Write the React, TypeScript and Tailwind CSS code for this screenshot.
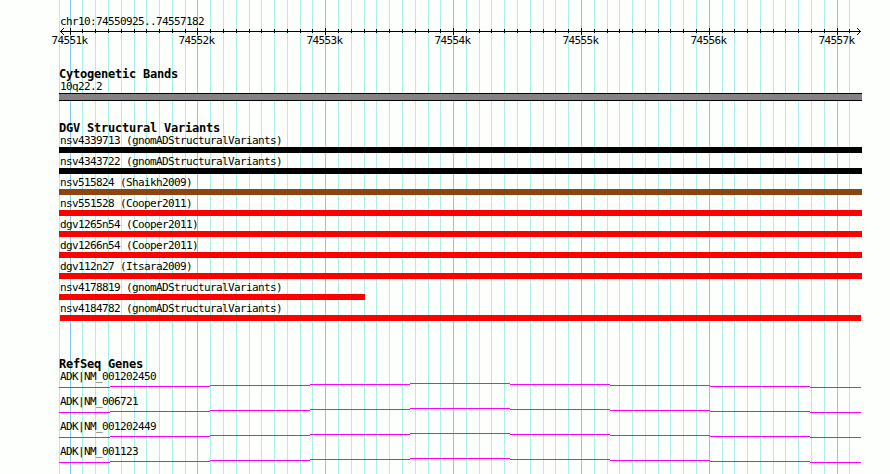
const MINOR = [
  59, 82, 95, 108, 121, 134, 146, 159, 172, 185, 210, 223, 236, 249, 261, 274, 287, 300, 312, 338, 351,
  364, 376, 389, 402, 415, 428, 440, 466, 479, 491, 504, 517, 530, 543, 555, 568, 594, 607, 619, 632,
  645, 658, 670, 683, 696, 722, 734, 747, 760, 773, 785, 798, 811, 824, 849,
];

const MAJOR = [
  { x: 70, label: "74551k" },
  { x: 197, label: "74552k" },
  { x: 325, label: "74553k" },
  { x: 453, label: "74554k" },
  { x: 581, label: "74555k" },
  { x: 709, label: "74556k" },
  { x: 837, label: "74557k" },
];

const variants = [
  { name: "nsv4339713 (gnomADStructuralVariants)", bar: "w-[803px] bg-black" },
  { name: "nsv4343722 (gnomADStructuralVariants)", bar: "w-[803px] bg-black" },
  { name: "nsv515824 (Shaikh2009)", bar: "w-[803px] bg-[#8b4513]" },
  { name: "nsv551528 (Cooper2011)", bar: "w-[803px] bg-[#ff0000]" },
  { name: "dgv1265n54 (Cooper2011)", bar: "w-[803px] bg-[#ff0000]" },
  { name: "dgv1266n54 (Cooper2011)", bar: "w-[803px] bg-[#ff0000]" },
  { name: "dgv112n27 (Itsara2009)", bar: "w-[803px] bg-[#ff0000]" },
  { name: "nsv4178819 (gnomADStructuralVariants)", bar: "w-[306px] bg-[#ff0000]" },
  { name: "nsv4184782 (gnomADStructuralVariants)", bar: "ml-px w-[801px] bg-[#ff0000]" },
];

const genes = ["ADK|NM_001202450", "ADK|NM_006721", "ADK|NM_001202449", "ADK|NM_001123"];

// [start, end, offset] of each step of an intron line
const STEPS = [
  [0, 51, 4],
  [51, 151, 3],
  [151, 251, 2],
  [251, 351, 1],
  [351, 451, 0],
  [451, 551, 1],
  [551, 651, 2],
  [651, 751, 3],
  [751, 802, 4],
];

function Heading({ children }: { children: string }) {
  return (
    <h2 className="h-3 text-[12px] leading-3 font-bold tracking-[-0.224px] whitespace-pre">{children}</h2>
  );
}

function Label({ children }: { children: string }) {
  return <p className="h-3 pl-px whitespace-pre">{children}</p>;
}

function Gridlines() {
  return (
    <svg className="absolute inset-0" width="890" height="474" shapeRendering="crispEdges">
      {MINOR.map((x) => (
        <rect key={x} x={x} y="0" width="1" height="474" fill="#aceeec" />
      ))}
      {MAJOR.map((m) => (
        <rect key={m.x} x={m.x} y="0" width="1" height="474" fill="#84caec" />
      ))}
    </svg>
  );
}

function Ruler() {
  return (
    <div className="relative h-[22px]">
      <svg className="block" width="803" height="8" viewBox="59 27 803 8" shapeRendering="crispEdges">
        <rect x="60" y="31" width="801" height="1" />
        {MINOR.slice(1).map((x) => (
          <rect key={x} x={x} y="29" width="1" height="4" />
        ))}
        {MAJOR.map((m) => (
          <rect key={m.x} x={m.x} y="28" width="1" height="7" />
        ))}
        {[1, 2, 3].map((d) => (
          <g key={d}>
            <rect x={60 + d} y={31 - d} width="1" height="1" />
            <rect x={60 + d} y={31 + d} width="1" height="1" />
            <rect x={860 - d} y={31 - d} width="1" height="1" />
            <rect x={860 - d} y={31 + d} width="1" height="1" />
          </g>
        ))}
      </svg>
      {MAJOR.map((m) => (
        <span key={m.x} className="absolute top-[7px]" style={{ left: m.x - 77.5 }}>
          {m.label}
        </span>
      ))}
    </div>
  );
}

export default function App() {
  return (
    <div className="relative h-[474px] w-[890px] overflow-hidden bg-[#fdfffc] font-['DejaVu_Sans_Mono',monospace] text-[11px] leading-[14px] tracking-[-0.622px] text-black">
      <Gridlines />
      <main className="relative pt-[15px] pl-[59px]">
        <Label>chr10:74550925..74557182</Label>
        <Ruler />

        <section className="pt-[19px]">
          <Heading>Cytogenetic Bands</Heading>
          <Label>10q22.2</Label>
          <div className="mt-px h-2 w-[803px] border-y border-black bg-[#848284]" />
        </section>

        <section className="pt-[21px]">
          <Heading>DGV Structural Variants</Heading>
          {variants.map((v) => (
            <div key={v.name} className="h-[21px]">
              <Label>{v.name}</Label>
              <div className={`mt-px h-1.5 ${v.bar}`} />
            </div>
          ))}
        </section>

        <section className="pt-[35px]">
          <Heading>RefSeq Genes</Heading>
          {genes.map((g) => (
            <div key={g} className="h-[25px]">
              <Label>{g}</Label>
              <svg className="mt-px block" width="803" height="5" shapeRendering="crispEdges">
                {STEPS.map(([from, to, y]) => (
                  <rect key={from} x={from} y={y} width={to - from} height="1" fill="#ff00ff" />
                ))}
              </svg>
            </div>
          ))}
        </section>
      </main>
    </div>
  );
}
